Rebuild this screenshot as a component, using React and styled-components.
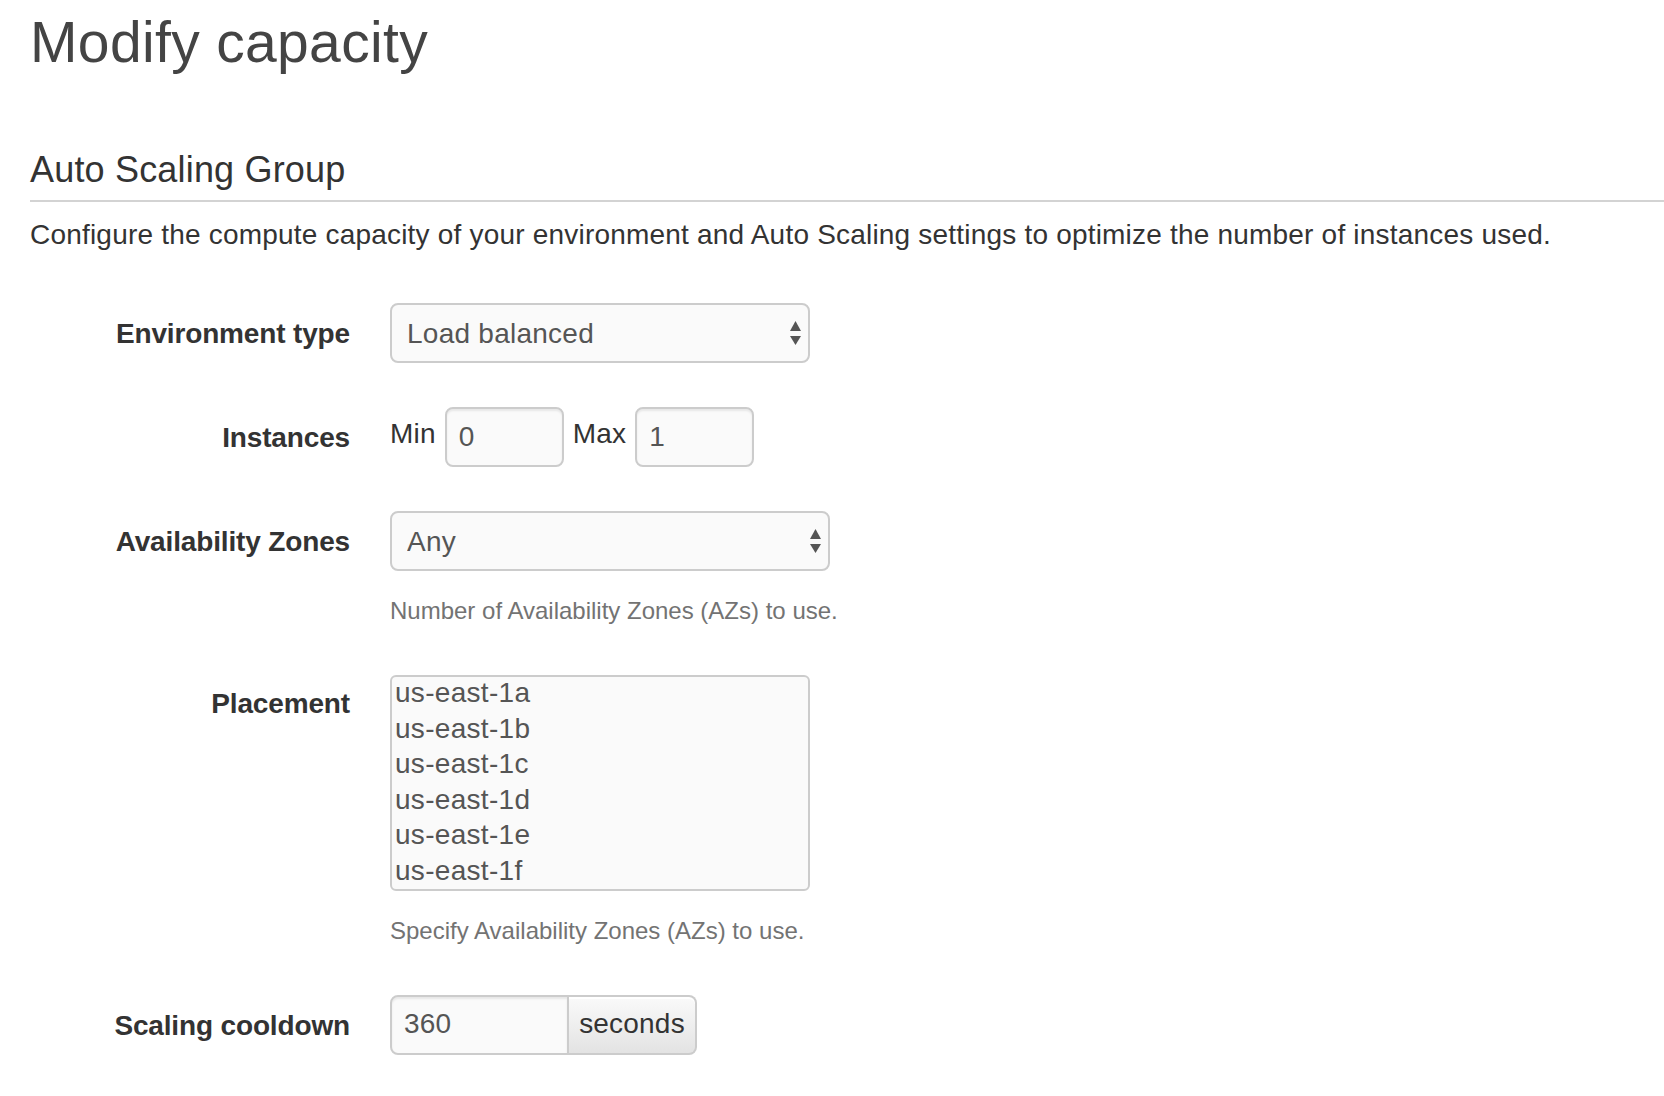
import React from 'react';
import styled, { createGlobalStyle } from 'styled-components';

const GlobalStyle = createGlobalStyle`
  html, body {
    margin: 0;
    padding: 0;
    background: #fff;
  }
  body {
    font-family: "Liberation Sans", Arial, Helvetica, sans-serif;
    color: #333;
  }
`;

const Page = styled.div`
  padding: 0 0 40px 30px;
  box-sizing: border-box;
`;

const Title = styled.h1`
  margin: 10px 0 0;
  font-size: 57px;
  font-weight: normal;
  line-height: 64px;
  letter-spacing: 0.35px;
  color: #444;
`;

const SectionTitle = styled.h3`
  margin: 76px 0 0;
  padding-bottom: 10px;
  font-size: 36px;
  font-weight: normal;
  line-height: 40px;
  letter-spacing: 0.18px;
  color: #333;
  border-bottom: 2px solid #d3d3d3;
`;

const Lead = styled.p`
  margin: 13px 0 0;
  font-size: 28px;
  line-height: 40px;
  letter-spacing: 0.2px;
  color: #333;
`;

const Form = styled.form`
  display: flex;
  flex-direction: column;
  gap: 44px;
  margin-top: 48px;
`;

const FormRow = styled.div`
  display: grid;
  grid-template-columns: 320px 1fr;
  column-gap: 40px;
  align-items: start;
`;

const Label = styled.label`
  padding-top: ${p => p.$top || 11}px;
  font-size: 28px;
  font-weight: bold;
  line-height: 40px;
  letter-spacing: -0.15px;
  text-align: right;
  color: #333;
`;

const Controls = styled.div`
  display: flex;
  flex-direction: column;
  align-items: flex-start;
`;

const SelectWrap = styled.div`
  position: relative;
  width: ${p => p.$width}px;
`;

const Select = styled.select`
  appearance: none;
  -webkit-appearance: none;
  width: 100%;
  height: 60px;
  box-sizing: border-box;
  margin: 0;
  padding: 0 40px 0 15px;
  border: 2px solid #ccc;
  border-radius: 8px;
  background: #fafafa;
  font-family: "Liberation Sans", Arial, sans-serif;
  font-size: 28px;
  letter-spacing: 0.25px;
  color: #555;
  outline: none;
`;

const Arrows = styled.svg`
  position: absolute;
  right: 9px;
  top: 50%;
  transform: translateY(-50%);
  pointer-events: none;
`;

const Help = styled.div`
  margin-top: 20px;
  font-size: 24px;
  line-height: 40px;
  color: #737373;
`;

const Inline = styled.div`
  display: flex;
  align-items: flex-start;
  gap: 9px;
`;

const InlineLabel = styled.span`
  padding-top: 7px;
  font-size: 28px;
  line-height: 40px;
  letter-spacing: 0.2px;
  color: #333;
`;

const TextInput = styled.input`
  width: ${p => p.$width || 119}px;
  height: 60px;
  box-sizing: border-box;
  margin: 0;
  padding: 0 12px ${p => p.$bottom || 0}px;
  border: 2px solid #ccc;
  border-radius: ${p => p.$radius || '8px'};
  background: #fafafa;
  box-shadow: inset 0 2px 2px rgba(0, 0, 0, 0.075);
  font-family: "Liberation Sans", Arial, sans-serif;
  font-size: 28px;
  letter-spacing: 0.2px;
  color: #555;
  outline: none;
`;

const ListBox = styled.div`
  width: 420px;
  height: 216px;
  box-sizing: border-box;
  padding: 0 3px;
  border: 2px solid #ccc;
  border-radius: 6px;
  background: #fafafa;
  overflow: hidden;
`;

const Option = styled.div`
  font-size: 28px;
  line-height: 31px;
  padding-bottom: 4.6px;
  letter-spacing: 0.3px;
  color: #555;
  white-space: nowrap;
`;

const Group = styled.div`
  display: flex;
`;

const Addon = styled.span`
  width: 128px;
  height: 60px;
  box-sizing: border-box;
  display: flex;
  align-items: center;
  justify-content: center;
  padding-bottom: 2px;
  border: 2px solid #ccc;
  border-left: 0;
  border-radius: 0 8px 8px 0;
  background: linear-gradient(#fafafa, #e3e3e3);
  box-shadow: inset 0 2px 0 #fff;
  font-size: 28px;
  line-height: 40px;
  letter-spacing: 0.2px;
  color: #333;
`;

const SelectArrows = () => (
  <Arrows width="11" height="24" viewBox="0 0 11 24">
    <polygon points="0,10 5.5,0 11,10" fill="#555" />
    <polygon points="0,15 11,15 5.5,24" fill="#555" />
  </Arrows>
);

const zones = ['us-east-1a', 'us-east-1b', 'us-east-1c', 'us-east-1d', 'us-east-1e', 'us-east-1f'];

export default function App() {
  return (
    <Page>
      <GlobalStyle />
      <Title>Modify capacity</Title>
      <SectionTitle>Auto Scaling Group</SectionTitle>
      <Lead>
        Configure the compute capacity of your environment and Auto Scaling settings to optimize the number of instances used.
      </Lead>

      <Form onSubmit={e => e.preventDefault()}>
        <FormRow>
          <Label>Environment type</Label>
          <Controls>
            <SelectWrap $width={420}>
              <Select defaultValue="lb">
                <option value="lb">Load balanced</option>
                <option value="single">Single instance</option>
              </Select>
              <SelectArrows />
            </SelectWrap>
          </Controls>
        </FormRow>

        <FormRow>
          <Label>Instances</Label>
          <Inline>
            <InlineLabel>Min</InlineLabel>
            <TextInput defaultValue="0" />
            <InlineLabel>Max</InlineLabel>
            <TextInput defaultValue="1" />
          </Inline>
        </FormRow>

        <FormRow>
          <Label>Availability Zones</Label>
          <Controls>
            <SelectWrap $width={440}>
              <Select defaultValue="any">
                <option value="any">Any</option>
                <option value="1">Any 1</option>
                <option value="2">Any 2</option>
                <option value="3">Any 3</option>
              </Select>
              <SelectArrows />
            </SelectWrap>
            <Help>Number of Availability Zones (AZs) to use.</Help>
          </Controls>
        </FormRow>

        <FormRow>
          <Label $top={9}>Placement</Label>
          <Controls>
            <ListBox>
              {zones.map(z => (
                <Option key={z}>{z}</Option>
              ))}
            </ListBox>
            <Help>Specify Availability Zones (AZs) to use.</Help>
          </Controls>
        </FormRow>

        <FormRow>
          <Label>Scaling cooldown</Label>
          <Group>
            <TextInput $width={179} $radius="8px 0 0 8px" $bottom={2} defaultValue="360" />
            <Addon>seconds</Addon>
          </Group>
        </FormRow>
      </Form>
    </Page>
  );
}
